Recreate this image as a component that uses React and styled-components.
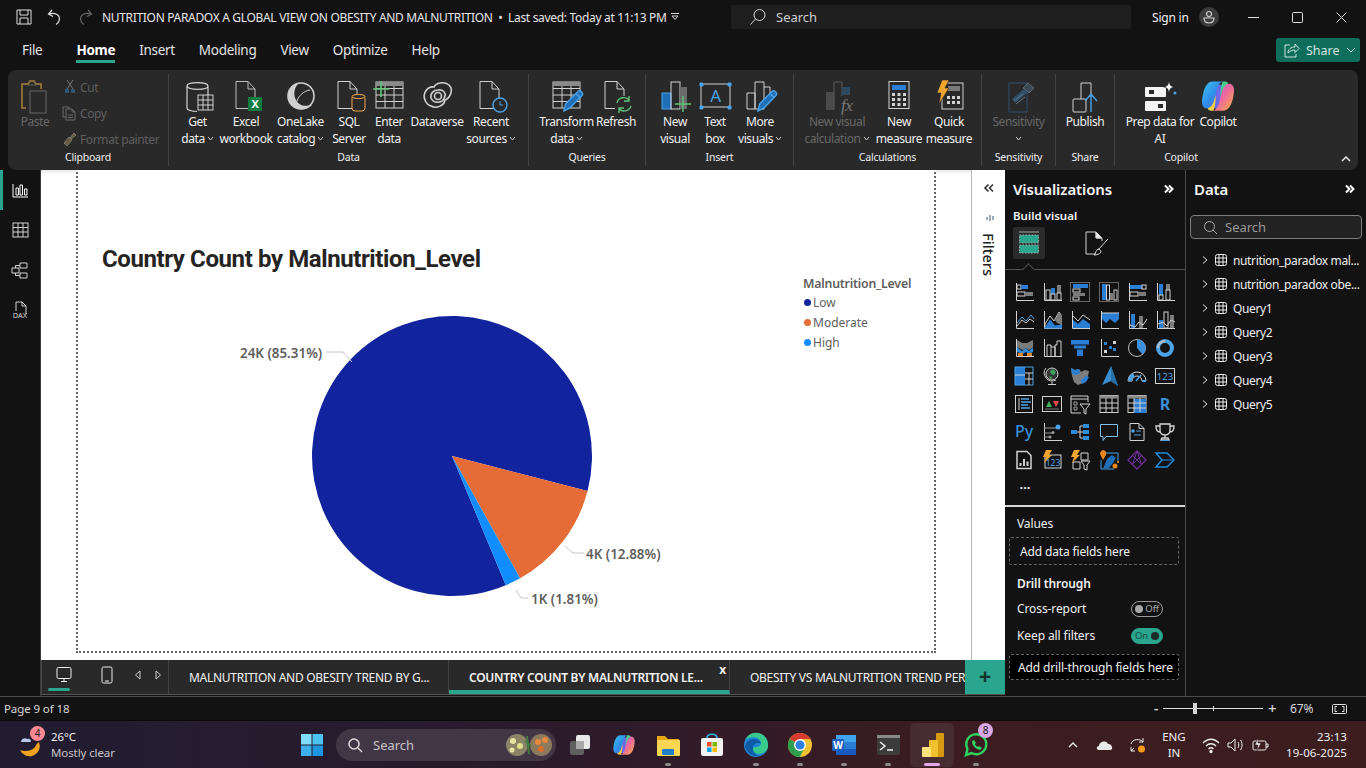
import React from "react";
import styled, { createGlobalStyle } from "styled-components";

const FONT = `"Noto Sans", "Open Sans", "Liberation Sans", sans-serif`;
const W = "#d2d2d2";
const B = "#2a7fd4";
const L = "#4ba3e8";
const G = "#7c7c7c";
const TEAL = "#2aa58e";

const GlobalStyle = createGlobalStyle`
  html, body { margin: 0; padding: 0; background: #111; }
  * { box-sizing: border-box; }
  body { font-family: ${FONT}; }
`;

const Page = styled.div`
  width: 1366px;
  height: 768px;
  display: flex;
  flex-direction: column;
  background: #121212;
  color: #f0f0f0;
  overflow: hidden;
`;

const Ico = styled.svg.attrs((p) => ({
  width: p.$w || p.$s || 36,
  height: p.$h || p.$s || 36,
  viewBox: `0 0 ${p.$w || p.$s || 36} ${p.$h || p.$s || 36}`,
  fill: "none",
  stroke: p.$c || W,
  strokeWidth: p.$sw || 1,
}))`
  display: block;
  flex: none;
  overflow: visible;
`;

/* title bar */
const TitleBar = styled.div`
  height: 34px;
  display: flex;
  align-items: center;
  padding-left: 15px;
  font-size: 12px;
`;
const TitleIcon = styled.div`
  width: ${(p) => p.$w}px;
  flex: none;
  display: flex;
`;
const TitleText = styled.div`
  width: 565px;
  white-space: nowrap;
  letter-spacing: -0.32px;
  color: #e6e6e6;
  margin-left: 1px;
`;
const TitleCaret = styled.div`
  width: 64px;
  padding-left: 3px;
`;
const SearchBox = styled.div`
  width: 400px;
  height: 24px;
  background: #1e1e1e;
  border-radius: 2px;
  display: flex;
  align-items: center;
  gap: 9px;
  padding-left: 18px;
  font-size: 13px;
  color: #cfcfcf;
`;
const SignIn = styled.div`
  margin-left: 21px;
  width: 92px;
  display: flex;
  align-items: center;
  gap: 10px;
  font-size: 12px;
  letter-spacing: -0.2px;
`;
const Avatar = styled.div`
  width: 20px;
  height: 20px;
  border-radius: 50%;
  background: #3b3b3b;
  display: flex;
  align-items: center;
  justify-content: center;
`;
const WinButtons = styled.div`
  display: flex;
  width: 99px;
  justify-content: space-between;
`;

/* menu */
const MenuBar = styled.div`
  height: 36px;
  display: flex;
  align-items: flex-start;
  padding-left: 22px;
  font-size: 13.5px;
  color: #e4e4e4;
`;
const MenuItem = styled.div`
  margin-right: ${(p) => p.$mr ?? 24}px;
  display: flex;
  align-items: center;
  height: 29px;
  padding-top: 6px;
  letter-spacing: -0.3px;
  font-weight: ${(p) => (p.$active ? 700 : 400)};
  color: ${(p) => (p.$active ? "#fff" : "#e4e4e4")};
  border-bottom: 3px solid ${(p) => (p.$active ? TEAL : "transparent")};
`;
const ShareButton = styled.div`
  margin-left: auto;
  margin-right: 6px;
  margin-top: 4px;
  width: 84px;
  height: 24px;
  background: #0f6d5b;
  border-radius: 3px;
  display: flex;
  align-items: center;
  gap: 6px;
  padding-left: 7px;
  font-size: 12.5px;
  color: #cfe6e0;
`;

/* ribbon */
const Ribbon = styled.div`
  margin: 0 8px;
  height: 100px;
  background: #292929;
  border-radius: 8px;
  display: flex;
  position: relative;
`;
const Group = styled.div`
  width: ${(p) => p.$w}px;
  height: 92px;
  margin-top: 4px;
  display: flex;
  flex-direction: column;
  border-right: ${(p) => (p.$last ? "none" : "1px solid #444")};
`;
const GroupBody = styled.div`
  height: 76px;
  display: flex;
  padding-left: ${(p) => p.$pl || 0}px;
`;
const GroupLabel = styled.div`
  height: 14px;
  line-height: 14px;
  text-align: center;
  font-size: 10.5px;
  letter-spacing: -0.2px;
  color: #eee;
`;
const RibbonBtn = styled.div`
  width: ${(p) => p.$w}px;
  flex: none;
  display: flex;
  flex-direction: column;
  align-items: center;
  padding-top: 4px;
  font-size: 12px;
  line-height: 17px;
  text-align: center;
  letter-spacing: -0.42px;
  white-space: nowrap;
  color: ${(p) => (p.$dim ? "#686868" : "#f0f0f0")};
`;
const BtnLabel = styled.div`
  margin-top: -1px;
  display: flex;
  flex-direction: column;
  align-items: center;
`;
const LabelLine = styled.span`
  display: flex;
  align-items: center;
  gap: 2px;
  min-height: 17px;
`;
const ClipColumn = styled.div`
  display: flex;
  flex-direction: column;
  padding-top: 2px;
  gap: 4px;
`;
const ClipRow = styled.div`
  height: 22px;
  display: flex;
  align-items: center;
  gap: 2px;
  font-size: 12px;
  letter-spacing: -0.38px;
  color: #5f5f5f;
  white-space: nowrap;
`;
const CollapseCaret = styled.div`
  position: absolute;
  right: 7px;
  bottom: 6px;
`;

/* main */
const Main = styled.div`
  height: 526px;
  display: flex;
`;
const Rail = styled.div`
  width: 41px;
  flex: none;
  border-right: 1px solid #3c3c3c;
  display: flex;
  flex-direction: column;
`;
const RailItem = styled.div`
  height: 40px;
  display: flex;
  align-items: center;
  justify-content: center;
  border-left: 3px solid ${(p) => (p.$active ? TEAL : "transparent")};
  padding-right: 3px;
`;
const Center = styled.div`
  width: 964px;
  flex: none;
  display: flex;
  flex-direction: column;
`;
const CanvasRow = styled.div`
  height: 490px;
  display: flex;
  background: #fff;
  overflow: hidden;
`;
const Canvas = styled.div`
  width: 931px;
  flex: none;
  padding-left: 35px;
  border-right: 1px solid #b8b8b8;
  overflow: hidden;
  background: linear-gradient(#e6e6e6, #fff 4px);
`;
const ReportPage = styled.div`
  width: 860px;
  height: 504px;
  margin-top: -21px;
  border: 2px dotted #666;
  border-top: none;
  background: #fff;
  padding: 94px 0 0 24px;
  color: #252423;
`;
const ChartTitle = styled.div`
  font-family: Roboto, sans-serif;
  font-size: 24px;
  font-weight: 700;
  height: 33px;
  line-height: 32px;
  color: #252423;
  letter-spacing: -0.4px;
`;
const ChartRow = styled.div`
  display: flex;
`;
const Legend = styled.div`
  margin-left: 13px;
  display: flex;
  flex-direction: column;
  font-size: 12px;
  color: #605e5c;
`;
const LegendTitle = styled.div`
  font-weight: 600;
  font-size: 12.3px;
  height: 16px;
  line-height: 16px;
  letter-spacing: -0.2px;
`;
const LegendItem = styled.div`
  height: 20px;
  display: flex;
  align-items: center;
  gap: 2px;
  &::before {
    content: "";
    width: 7px;
    height: 7px;
    border-radius: 50%;
    margin-left: 1px;
    background: ${(p) => p.$c};
  }
`;
const PieLabel = styled.text`
  font-family: ${FONT};
  font-size: 13.4px;
  font-weight: 600;
  fill: #605e5c;
  stroke: none;
`;
const FilterPane = styled.div`
  width: 33px;
  flex: none;
  display: flex;
  flex-direction: column;
  align-items: center;
  color: #333;
  padding-top: 13px;
`;
const FilterBars = styled.div`
  margin: 20px 0 0 5px;
`;
const FiltersLabel = styled.div`
  writing-mode: vertical-rl;
  font-size: 14.5px;
  font-weight: 500;
  margin-top: 10px;
  color: #222;
  letter-spacing: 0.1px;
`;
const TabBar = styled.div`
  height: 35px;
  background: #292929;
  border-bottom: 1px solid #555;
  display: flex;
`;
const ViewTabs = styled.div`
  width: 128px;
  flex: none;
  display: flex;
  align-items: center;
  padding-bottom: 5px;
  border-right: 1px solid #444;
  border-left: 1px solid #444;
  position: relative;
`;
const ViewUnderline = styled.div`
  position: absolute;
  left: 6px;
  bottom: 3px;
  width: 22px;
  height: 3px;
  border-radius: 2px;
  background: ${TEAL};
`;
const ViewIcon = styled.div`
  width: ${(p) => p.$w}px;
  display: flex;
  justify-content: center;
`;
const Tab = styled.div`
  width: ${(p) => p.$w}px;
  flex: ${(p) => (p.$grow ? 1 : "none")};
  min-width: 0;
  overflow: hidden;
  display: flex;
  align-items: center;
  padding: 5px 0 0 20px;
  white-space: nowrap;
  font-size: 12px;
  letter-spacing: -0.28px;
  font-weight: ${(p) => (p.$active ? 600 : 400)};
  color: #f2f2f2;
  position: relative;
  border-bottom: 4px solid ${(p) => (p.$active ? TEAL : "transparent")};
  border-right: ${(p) => (p.$sep ? "1px solid #444" : "none")};
`;
const TabClose = styled.span`
  position: absolute;
  right: 3px;
  top: 1px;
  font-size: 12px;
  font-weight: 700;
`;
const AddTab = styled.div`
  width: 40px;
  flex: none;
  background: ${TEAL};
  display: flex;
  align-items: center;
  justify-content: center;
  padding-bottom: 3px;
  color: #14322c;
  font-size: 22px;
  font-weight: 700;
  border-bottom: 1px solid ${TEAL};
`;

/* right panes */
const VizPane = styled.div`
  width: 181px;
  flex: none;
  border-right: 1px solid #4a4a4a;
  display: flex;
  flex-direction: column;
  position: relative;
`;
const PaneHead = styled.div`
  height: 38px;
  padding: 0 11px 0 8px;
  display: flex;
  align-items: center;
  justify-content: space-between;
  font-size: 15px;
  font-weight: 600;
  letter-spacing: -0.1px;
  color: #f4f4f4;
`;
const SubHead = styled.div`
  font-size: 11.5px;
  font-weight: 600;
  padding-left: 8px;
  height: 17px;
  line-height: 15px;
  color: #f4f4f4;
`;
const BuildTabs = styled.div`
  display: flex;
  padding-left: 8px;
  height: 45px;
  border-bottom: 1px solid #555;
  position: relative;
  gap: 34px;
`;
const BuildTab = styled.div`
  width: 32px;
  height: 32px;
  border-radius: 2px;
  background: ${(p) => (p.$active ? "#2a2a2a" : "transparent")};
  display: flex;
  align-items: center;
  justify-content: center;
  margin-top: 2px;
`;
const Notch = styled.div`
  position: absolute;
  left: 19px;
  bottom: -5px;
  width: 9px;
  height: 9px;
  background: #121212;
  border-left: 1px solid #555;
  border-top: 1px solid #555;
  transform: rotate(45deg);
`;
const Gallery = styled.div`
  display: grid;
  grid-template-columns: repeat(6, 28.2px);
  grid-auto-rows: 28px;
  padding: 8px 0 0 5px;
  height: 209px;
  justify-items: center;
  align-items: center;
`;
const MoreDots = styled.div`
  width: 40px;
  font-size: 13px;
  font-weight: 700;
  text-align: center;
  line-height: 10px;
`;
const Wells = styled.div`
  border-top: 2px solid #d8d8d8;
  position: absolute;
  top: 335px;
  left: 0;
  right: 0;
  padding-top: 8px;
  font-size: 12px;
  letter-spacing: -0.1px;
  display: flex;
  flex-direction: column;
`;
const WellLabel = styled.div`
  padding-left: 12px;
  height: 18px;
  line-height: 18px;
  margin-top: ${(p) => p.$mt || 0}px;
  font-weight: ${(p) => (p.$bold ? 600 : 400)};
`;
const DropZone = styled.div`
  margin: ${(p) => p.$mt}px 6px 0 4px;
  height: ${(p) => p.$h}px;
  border: 1px dashed #666;
  border-radius: 2px;
  background: ${(p) => p.$bg || "transparent"};
  display: flex;
  align-items: center;
  padding-left: ${(p) => p.$pl}px;
  font-size: 12px;
  letter-spacing: -0.15px;
  color: #f0f0f0;
`;
const ToggleRow = styled.div`
  height: 27px;
  margin-top: ${(p) => p.$mt || 0}px;
  padding: 0 22px 0 12px;
  display: flex;
  align-items: center;
  justify-content: space-between;
`;
const Toggle = styled.div`
  width: 32px;
  height: 16px;
  border-radius: 8px;
  border: 1px solid ${(p) => (p.$on ? TEAL : "#9a9a9a")};
  background: ${(p) => (p.$on ? TEAL : "transparent")};
  color: ${(p) => (p.$on ? "#0f4a3e" : "#a8a8a8")};
  font-size: 9.5px;
  display: flex;
  flex-direction: ${(p) => (p.$on ? "row" : "row-reverse")};
  align-items: center;
  justify-content: space-between;
  padding: 0 3px;
  &::after {
    content: "";
    width: 8px;
    height: 8px;
    border-radius: 50%;
    background: ${(p) => (p.$on ? "#1c2c2a" : "#a8a8a8")};
  }
`;
const DataPane = styled.div`
  flex: 1;
  display: flex;
  flex-direction: column;
`;
const DataSearch = styled.div`
  margin: 7px 4px 0 4px;
  height: 24px;
  background: #222;
  border: 1px solid #7e7e7e;
  border-radius: 4px;
  display: flex;
  align-items: center;
  gap: 7px;
  padding-left: 12px;
  font-size: 13px;
  color: #9a9a9a;
`;
const Tree = styled.div`
  margin-top: 9px;
  display: flex;
  flex-direction: column;
`;
const TreeRow = styled.div`
  height: 24px;
  display: flex;
  align-items: center;
  padding-left: 15px;
  gap: 6px;
  font-size: 12px;
  letter-spacing: -0.36px;
  color: #eee;
  white-space: nowrap;
  overflow: hidden;
`;

/* status and task bars */
const StatusBar = styled.div`
  height: 24px;
  display: flex;
  align-items: center;
  padding-left: 4px;
  font-size: 11.5px;
  letter-spacing: -0.1px;
  color: #d8d8d8;
  border-top: 1px solid #4d4d4d;
`;
const ZoomTools = styled.div`
  margin-left: auto;
  display: flex;
  align-items: center;
  color: #d8d8d8;
  font-size: 12px;
  padding-right: 19px;
`;
const ZoomSign = styled.span`
  width: 8px;
  text-align: center;
  font-size: 15px;
  line-height: 15px;
  font-weight: 500;
`;
const ZoomTrack = styled.div`
  width: 100px;
  height: 1px;
  background: #ddd;
  position: relative;
  margin: 0 5px 0 3px;
`;
const ZoomThumb = styled.div`
  position: absolute;
  left: 30px;
  top: -5px;
  width: 4px;
  height: 11px;
  background: #d4d4d4;
`;
const ZoomTick = styled.div`
  position: absolute;
  left: 50px;
  top: -2px;
  width: 1px;
  height: 5px;
  background: #ddd;
`;
const ZoomPct = styled.div`
  width: 56px;
  padding-left: 14px;
`;
const TaskBar = styled.div`
  height: 48px;
  border-top: 1px solid #0a0a0a;
  background: linear-gradient(90deg, #211c30 0%, #2a1b2c 38%, #3a1c22 68%, #3d1e1e 100%);
  display: flex;
  align-items: center;
  color: #f0f0f0;
`;
const Weather = styled.div`
  width: 290px;
  flex: none;
  display: flex;
  align-items: center;
  padding-left: 18px;
  gap: 9px;
  position: relative;
  font-size: 11.5px;
  line-height: 16px;
  letter-spacing: -0.1px;
`;
const WeatherText = styled.div`
  display: flex;
  flex-direction: column;
  color: #f0f0f0;
  & > span + span {
    color: #c8c4c8;
  }
`;
const Badge = styled.div`
  position: absolute;
  left: ${(p) => p.$l}px;
  top: ${(p) => p.$t}px;
  width: 15px;
  height: 15px;
  border-radius: 50%;
  background: ${(p) => p.$c};
  color: #1a1a1a;
  font-size: 10px;
  line-height: 15px;
  text-align: center;
`;
const TaskSlot = styled.div`
  width: 44px;
  height: 44px;
  flex: none;
  display: flex;
  align-items: center;
  justify-content: center;
  position: relative;
  border-radius: 5px;
  background: ${(p) => (p.$active ? "rgba(255,255,255,.07)" : "transparent")};
  &::after {
    content: "";
    display: ${(p) => (p.$dot ? "block" : "none")};
    position: absolute;
    bottom: 1px;
    left: 50%;
    transform: translateX(-50%);
    width: ${(p) => (p.$active ? 16 : 6)}px;
    height: 3px;
    border-radius: 2px;
    background: ${(p) => (p.$active ? "#e3a8e8" : "#8f8a8c")};
  }
`;
const TaskSearch = styled.div`
  width: 220px;
  height: 32px;
  flex: none;
  margin: 0 2px 0 2px;
  background: rgba(255, 255, 255, 0.12);
  border-radius: 16px;
  display: flex;
  align-items: center;
  padding-left: 11px;
  gap: 10px;
  font-size: 13px;
  color: #c8c4c8;
`;
const SearchArt = styled.div`
  margin-left: auto;
  margin-right: 3px;
`;
const Tray = styled.div`
  margin-left: auto;
  display: flex;
  align-items: center;
  font-size: 11.5px;
  padding-right: 19px;
`;
const TraySlot = styled.div`
  width: ${(p) => p.$w}px;
  display: flex;
  justify-content: center;
  flex: none;
`;
const Lang = styled.div`
  width: 36px;
  text-align: center;
  line-height: 16px;
  margin: 0 6px 0 3px;
`;
const Clock = styled.div`
  margin-left: 12px;
  text-align: right;
  line-height: 16px;
  letter-spacing: 0.1px;
`;

/* drawings */
const Caret = () => (
  <Ico $s={7} $c="#d0d0d0"><path d="M1 2l2.500 3L6 2" /></Ico>
);
const DoubleChevron = () => (
  <Ico $s={10} $c="#fff" $sw={2}><path d="M1 1.500l3.500 3.500L1 8.500M5 1.500L8.500 5 5 8.500" /></Ico>
);
const Grid = ({ x, y, w, h, r, c, s }) => {
  const d = [];
  for (let i = 1; i < r; i++) d.push(`M${x} ${y + (h * i) / r}h${w}`);
  for (let i = 1; i < c; i++) d.push(`M${x + (w * i) / c} ${y}v${h}`);
  return (
    <g stroke={s || W}>
      <rect x={x} y={y} width={w} height={h} fill="#292929" />
      <path d={d.join("")} />
    </g>
  );
};
const Doc = ({ s }) => (
  <path d="M8 3.500H20L27 11V30.500H8ZM20 3.500V11H27" stroke={s} />
);
const Pencil = ({ dx = 0, dy = 0 }) => (
  <g transform={`translate(${dx} ${dy})`} stroke={L} strokeWidth="1.4">
    <path d="M13 33l1.500-7L27 13.500c2-2 6 1.500 4 4L19 30z" fill="#1f6fb8" />
    <path d="M25 15.500l4 4" />
  </g>
);
const CopilotMark = ({ id, s = 32 }) => (
  <svg width={s} height={s} viewBox="0 0 32 32">
    <defs>
      <linearGradient id={`${id}a`} x1="0" y1="0" x2="1" y2="1">
        <stop offset="0" stopColor="#39c6f0" />
        <stop offset="0.55" stopColor="#2f8ae8" />
        <stop offset="1" stopColor="#7a5ce0" />
      </linearGradient>
      <linearGradient id={`${id}b`} x1="0" y1="0" x2="1" y2="1">
        <stop offset="0" stopColor="#b45de0" />
        <stop offset="0.5" stopColor="#f06a9a" />
        <stop offset="1" stopColor="#f7b23c" />
      </linearGradient>
    </defs>
    <path d="M14 6h8l-4 21h-8z" fill="#6a6ae8" />
    <path d="M11 3h9c-4 2-5 6-6 11-1 6-3 12-6 13H6C3 27 1 24 2 18 3 10 6 3 11 3z" fill={`url(#${id}a)`} />
    <path d="M21 29h-9c4-2 5-6 6-11 1-6 3-12 6-13h2c3 0 5 3 4 9-1 8-4 15-9 15z" fill={`url(#${id}b)`} />
    <path d="M20 3h2c2 0 3 1 3 2-3 1-5 4-6 9l-1 3c0-6 1-11 2-14z" fill="#46d08c" />
    <path d="M12 29h-2c-2 0-3-1-3-2 3-1 5-4 6-9l1-3c0 6-1 11-2 14z" fill="#f5d142" />
  </svg>
);

const ribbonIcons = {
  paste: (
    <Ico $c="#666">
      <path d="M9 30H5V6h6l2-3h4l2 3h5v5" stroke="#8a6b38" strokeWidth="2" />
      <path d="M11 7h8v-1" />
      <rect x="13" y="13" width="16" height="22" fill="#292929" />
    </Ico>
  ),
  get: (
    <Ico>
      <path d="M7 8c0-4.500 21-4.500 21 0s-21 4.500-21 0V30c0 2 5 3.500 10 3.500M28 8v9" strokeWidth="1.2" />
      <Grid x={18} y={17} w={15} h={15} r={3} c={3} />
    </Ico>
  ),
  excel: (
    <Ico>
      <Doc s="#bdbdbd" />
      <rect x="20" y="19" width="14" height="14" fill="#107c41" stroke="none" />
      <text x="27" y="30" fill="#fff" stroke="none" fontSize="11" fontWeight="700" textAnchor="middle" fontFamily={FONT}>X</text>
    </Ico>
  ),
  onelake: (
    <Ico>
      <circle cx="18" cy="18" r="13" strokeWidth="1.6" stroke="#d0d0d0" />
      <path d="M16 5C8 6 4 13 5 20c1 6 6 10 11 11 6 1 10-1 13-4-9 2-13 0-16-5-3-5-2-13 3-17z" fill="#d0d0d0" stroke="none" />
      <path d="M14 23c2-6 7-10 13-11" stroke="#d0d0d0" />
    </Ico>
  ),
  sql: (
    <Ico>
      <path d="M7 3.500H19L26 11V30.500H7ZM19 3.500V11H26" />
      <rect x="21" y="17" width="13" height="16" rx="3" fill="#292929" stroke="#f0a64a" />
      <ellipse cx="27.500" cy="18.500" rx="6.500" ry="2" stroke="#f0a64a" fill="#292929" />
    </Ico>
  ),
  enter: (
    <Ico>
      <Grid x={5} y={4} w={27} h={26} r={4} c={3} />
      <rect x="5" y="4" width="27" height="4" fill="#8a8a8a" stroke="none" />
      <path d="M2 11h16M10 3v16" stroke="#5fc777" strokeWidth="1.6" />
    </Ico>
  ),
  dataverse: (
    <Ico $sw={1.6} $c="#cfcfcf">
      <path d="M6 22c-3-7 3-14 9-13 2-4 10-6 15-2 5 5 1 13-4 15-1 6-9 9-14 6-3-1-5-3-6-6z" />
      <path d="M12 20c-1-5 3-8 7-8 5-1 8 3 7 6-1 5-5 7-9 6-2 0-4-2-5-4z" />
      <circle cx="19" cy="18" r="3.500" />
    </Ico>
  ),
  recent: (
    <Ico>
      <path d="M7 3.500H19L26 11V30.500H7ZM19 3.500V11H26" />
      <circle cx="27" cy="27" r="7" stroke={L} strokeWidth="1.4" fill="#292929" />
      <path d="M27 23v4h3" stroke={L} />
    </Ico>
  ),
  transform: (
    <Ico>
      <Grid x={4} y={4} w={27} h={26} r={4} c={3} />
      <rect x="4" y="4" width="27" height="4" fill="#8a8a8a" stroke="none" />
      <Pencil dx={2} />
    </Ico>
  ),
  refresh: (
    <Ico>
      <path d="M7 3.500H19L26 11V30.500H7ZM19 3.500V11H26" />
      <rect x="17" y="18" width="18" height="17" fill="#292929" stroke="none" />
      <path d="M19 25c1-6 9-7 12-3M33 28c-2 6-9 6-12 3M31 18v5h-5M21 35v-5h5" stroke="#5fc777" strokeWidth="1.3" />
    </Ico>
  ),
  newVisual: (
    <Ico>
      <rect x="5" y="15" width="9" height="16" fill="#1f6fb8" stroke={L} />
      <rect x="14" y="4" width="9" height="27" />
      <rect x="23" y="9" width="7" height="22" fill="#6b6b6b" stroke="none" />
      <path d="M18 26h16M26 18v16" stroke="#5fc777" strokeWidth="1.4" />
    </Ico>
  ),
  textBox: (
    <Ico>
      <rect x="4" y="6" width="29" height="23" />
      <path d="M3 5h3v3H3zM31 5h3v3h-3zM3 28h3v3H3zM31 28h3v3h-3z" fill={L} stroke={L} />
      <text x="18.500" y="24" fontSize="17" textAnchor="middle" fill={L} stroke="none" fontFamily={FONT}>A</text>
    </Ico>
  ),
  more: (
    <Ico>
      <path d="M5 15h8v16H5zM13 4h9v27h-9zM22 9h6v7" />
      <Pencil dx={3} />
    </Ico>
  ),
  calc: (
    <Ico $c="#5a5a5a">
      <rect x="7" y="14" width="8" height="18" fill="#4a4a4a" stroke="none" />
      <path d="M15 32V4h8v14" />
      <path d="M23 9h8v8h-8z" fill="#2e4a62" stroke="none" />
      <text x="22" y="33" fontSize="17" fontStyle="italic" fontFamily="Liberation Serif, serif" fill="#7a7a7a" stroke="none">fx</text>
    </Ico>
  ),
  measure: (
    <Ico>
      <rect x="8" y="3.500" width="20" height="27" />
      <rect x="11" y="7" width="14" height="5" fill="#2a7fd4" stroke="none" />
      <path d="M11 15h3v3h-3zM16.500 15h3v3h-3zM22 15h3v3h-3zM11 20h3v3h-3zM16.500 20h3v3h-3zM22 20h3v3h-3zM11 25h3v3h-3zM16.500 25h3v3h-3zM22 25h3v3h-3z" fill={W} stroke="none" />
    </Ico>
  ),
  quick: (
    <Ico>
      <rect x="11" y="5" width="21" height="26" />
      <rect x="17" y="8" width="12" height="5" fill="#7a7a7a" stroke="none" />
      <path d="M16 18h3v3h-3zM21 18h3v3h-3zM26 18h3v3h-3zM16 23h3v3h-3zM21 23h3v3h-3zM26 23h3v3h-3z" fill={W} stroke="none" />
      <path d="M11 2h7l-4 8h4L8 26l2-11H6z" fill="#f2a52f" stroke="#292929" strokeWidth=".6" />
    </Ico>
  ),
  sensitivity: (
    <Ico $c="#2f4f6b">
      <path d="M8 5h18v29H8z" />
      <path d="M11 21l12-10 3 4-12 10z" fill="#2f4f6b" stroke="none" />
      <path d="M22 10l5-5 6 5-5 5z" stroke="#5a6a76" fill="#3c4a56" />
      <path d="M13 23l9-7M15 26l9-7" stroke="#62788a" />
    </Ico>
  ),
  publish: (
    <Ico>
      <path d="M14 21V5h10v14" />
      <rect x="6" y="21" width="13" height="13" rx="1" />
      <path d="M24 34V17M18 23l6-7 6 7" stroke={L} strokeWidth="1.4" />
    </Ico>
  ),
  prep: (
    <Ico>
      <rect x="3" y="9" width="21" height="10" rx="1" fill="#f4f4f4" stroke="none" />
      <rect x="3" y="23" width="21" height="10" rx="1" fill="#f4f4f4" stroke="none" />
      <rect x="7" y="12" width="5" height="4" fill="#292929" stroke="none" />
      <rect x="16" y="26" width="5" height="4" fill="#292929" stroke="none" />
      <path d="M27 2c1 5 2 6 6 7-4 1-5 2-6 7-1-5-2-6-6-7 4-1 5-2 6-7z" fill="#292929" stroke="none" />
      <path d="M27 4c.8 3.500 1.500 4.300 4.500 5-3 .7-3.700 1.500-4.500 5-.8-3.500-1.500-4.300-4.500-5 3-.7 3.700-1.500 4.500-5z" fill="#fff" stroke="none" />
      <circle cx="33" cy="15" r="1.500" fill={L} stroke="none" />
    </Ico>
  ),
};

const ribbon = [
  { w: 161, label: "Clipboard", clip: true },
  { w: 360, label: "Data", pl: 7, items: [
    ["get", 43, ["Get", "data"], 2], ["excel", 54, ["Excel", "workbook"]], ["onelake", 55, ["OneLake", "catalog"], 2],
    ["sql", 42, ["SQL", "Server"]], ["enter", 38, ["Enter", "data"]], ["dataverse", 58, ["Dataverse"]], ["recent", 50, ["Recent", "sources"], 2],
  ] },
  { w: 117, label: "Queries", pl: 11, items: [["transform", 53, ["Transform", "data"], 2], ["refresh", 46, ["Refresh"]]] },
  { w: 148, label: "Insert", pl: 9, items: [["newVisual", 40, ["New", "visual"]], ["textBox", 40, ["Text", "box"]], ["more", 50, ["More", "visuals"], 2]] },
  { w: 188, label: "Calculations", pl: 10, items: [["calc", 66, ["New visual", "calculation"], 2, true], ["measure", 58, ["New", "measure"]], ["quick", 42, ["Quick", "measure"]]] },
  { w: 74, label: "Sensitivity", items: [["sensitivity", 73, ["Sensitivity", ""], 2, true]] },
  { w: 59, label: "Share", items: [["publish", 58, ["Publish"]]] },
  { w: 132, label: "Copilot", pl: 7, items: [["prep", 76, ["Prep data for", "AI"]], ["copilot", 40, ["Copilot"]]] },
];

const R = (x, y, w, h, f, k) => (
  <rect key={k} x={x} y={y} width={w} height={h} fill={f || "none"} stroke={f ? "none" : W} />
);
const axis = <path d="M2.500 1V18.500H20" />;

const viz = [
  <>{axis}{R(3, 3, 4, 4)}{R(7, 3, 7, 4, B)}{R(3, 10, 8, 4)}{R(11, 10, 8, 4, G)}</>,
  <>{axis}{R(4, 8, 4, 10)}{R(9, 6, 4, 6, B)}{R(9, 12, 4, 6)}{R(15, 3, 4, 8, G)}{R(15, 11, 4, 7)}</>,
  <><rect x=".5" y=".5" width="19" height="19" stroke="#666" />{R(3, 2, 15, 4, B)}{R(3, 7, 7, 3)}{R(3, 11, 12, 3, G)}{R(3, 15, 6, 3)}</>,
  <><rect x=".5" y=".5" width="19" height="19" stroke="#666" />{R(3, 2, 4, 16, B)}{R(7.500, 3, 3, 15)}{R(11, 11, 3, 7, G)}{R(15, 8, 3, 10)}</>,
  <>{axis}{R(3, 3, 12, 4, B)}{R(15, 3, 4, 4)}{R(3, 10, 8, 4)}{R(11, 10, 8, 4, G)}</>,
  <>{axis}{R(4, 2, 4, 11, B)}{R(4, 13, 4, 5)}{R(11, 2, 4, 6, G)}{R(11, 8, 4, 10)}</>,
  <>{axis}<path d="M3 13l5-6 4 4 5-6 3 4" stroke={L} /><path d="M3 16l5-6 4 3 4-4 4 3" /></>,
  <>{axis}<path d="M3 18V14L8 6l4 5 5-9 2 3v13z" fill="none" /><path d="M2 18.500l6-9 5 6 7-1v4z" fill={B} stroke="none" /><path d="M13 10l4-8 3 6v7l-5-2z" fill={G} stroke="none" /></>,
  <>{axis}<path d="M3 6l5 5 5-6 7 5" /><path d="M3 10l5 4 5-5 7 5v4H3z" fill={B} stroke="none" /></>,
  <>{axis}<path d="M3 3h17v6l-4 4-5-4-4 4-4-4z" fill={B} stroke="none" /><path d="M3 3h17" /></>,
  <>{axis}{R(4, 4, 4, 14, B)}{R(12, 6, 4, 12, G)}<path d="M3 15l5 2 4-5 4 3 4-6" /></>,
  <>{axis}{R(4, 10, 4, 8, B)}{R(9, 2, 4, 16)}{R(15, 5, 4, 13, G)}<path d="M3 14l5-2 4 4 4-6 4 2" /></>,
  <>{axis}<path d="M3 2l5 3 5 0 6-3v7l-4 3-3-2-3 2-6-3z" fill={G} stroke="none" /><path d="M3 9l5 4 4-3 3 3 4-4v5l-4 2-3-2-3 2-6-2z" fill="#2f8ad8" stroke="none" /><path d="M4 15h5v3H4zM13 15h5v3h-5z" fill="#e8871e" stroke="none" /></>,
  <>{axis}<path d="M5 18V7h4v11M9 9h4v9M13 18V7h2V3h4v15" /></>,
  <><path d="M1 2h18v5h-3v4h-3v7H7v-7H4V7H1z" fill={B} stroke="none" /><path d="M1 7h18M4 11h12" stroke="#121212" /></>,
  <>{axis}{R(5, 4, 3, 3, B)}{R(5, 12, 3, 3, W)}{R(10, 8, 3, 3, B)}{R(14, 3, 3, 3, W)}{R(14, 10, 3, 3, B)}</>,
  <><circle cx="10" cy="10" r="8.500" stroke="#bbb" /><path d="M10 1.500a8.500 8.500 0 0 1 5.500 15L10 10z" fill="#3b8fdc" stroke="none" /></>,
  <><circle cx="10" cy="10" r="7" stroke={L} strokeWidth="4" /><path d="M10 3a7 7 0 0 0-7 7" stroke="#bcbcbc" strokeWidth="2" /></>,
  <>{R(1, 1, 10, 18, B)}<rect x="1" y="1" width="18" height="18" stroke={L} /><path d="M11 7h8M11 13h8M15 7v12M1 9h10" stroke={W} /></>,
  <><circle cx="10" cy="8" r="6" fill="#333" /><path d="M8 5l3-2 3 3-2 3-3-1zM7 10l3 1-1 3z" fill="#3fa35c" stroke="none" /><path d="M4 2a8 8 0 0 0 10 12M10 16v2M6 18.500h8" /></>,
  <><path d="M1 2l4 2 4-1 2 3 4-2 4 1-2 9-4 3-5 2-4-3-2-6z" fill={G} stroke="none" /><path d="M1 2l4 2 4-1 1 4-4 2-4-1zM11 14l5-4 3 1-3 5-4 2z" fill={B} stroke="none" /></>,
  <><path d="M12 0l7 20-7-5-9 4z" fill="#3a8fcf" stroke="none" /><path d="M12 0v15l7 5z" fill="#2670a8" stroke="none" /></>,
  <><path d="M1 15a9 9 0 0 1 18 0h-4a5 5 0 0 0-10 0z" stroke={W} /><path d="M1 15a9 9 0 0 1 5-8l2 4a5 5 0 0 0-3 4z" fill={L} stroke="none" /><path d="M9 15l5-6" stroke={L} strokeWidth="1.500" /><path d="M15 15h4" stroke={L} strokeWidth="2" /></>,
  <><rect x=".5" y="2.500" width="19" height="15" /><text x="10" y="14" fontSize="9.500" textAnchor="middle" fill={L} stroke="none" fontFamily={FONT}>123</text></>,
  <><rect x="1.500" y="1.500" width="17" height="17" /><path d="M5 4v12" /><path d="M7 5h8M7 8h10M7 11h7M7 14h9" stroke={L} strokeWidth="1.400" /></>,
  <><rect x=".5" y="2.500" width="19" height="15" /><path d="M4 13l3-6 3 6z" fill="#3fb45c" stroke="none" /><path d="M11 7h6l-3 6z" fill="#e84b4b" stroke="none" /><path d="M3 15h14" stroke="#777" /></>,
  <><path d="M18 8V2H1v17h10M1 5h17" /><path d="M10 10h10l-4 5v5l-2-1v-4z" /><path d="M4 8h3v3H4zM4 13h3v3H4z" stroke="#9a9a9a" /></>,
  <><rect x="1" y="1.500" width="18" height="17" /><rect x="1" y="1.500" width="18" height="3" fill="#8a8a8a" stroke="none" /><path d="M1 9h18M1 14h18M7 4v14M13 4v14" /></>,
  <><rect x="1" y="1.500" width="18" height="17" />{R(7, 5, 12, 14, B)}<rect x="1" y="1.500" width="18" height="3" fill="#8a8a8a" stroke="none" /><path d="M1 9h18M1 14h18M7 4v14M13 4v14" stroke={W} /></>,
  <text x="10" y="16" fontSize="16" fontWeight="700" textAnchor="middle" fill="#3a8fd8" stroke="none" fontFamily={FONT}>R</text>,
  <text x="10" y="15" fontSize="16" fontWeight="500" textAnchor="middle" fill="#3a8fd8" stroke="none" fontFamily={FONT}>Py</text>,
  <>{axis}<path d="M2 6h13M2 11h8M2 15h5" stroke="#999" /><circle cx="16" cy="5" r="2.500" fill={L} stroke="none" /><circle cx="11" cy="10.500" r="1.500" fill="#999" stroke="none" /><circle cx="8" cy="15" r="1.500" fill="#999" stroke="none" /></>,
  <><path d="M1 8h6v4H1zM13 2h6v4h-6zM13 8h6v4h-6zM13 14h6v4h-6z" fill="#2f8ad8" stroke="none" /><path d="M7 10h3M10 4v12M10 4h3M10 10h3M10 16h3" stroke={W} /></>,
  <path d="M1.500 2.500h17v12H7l-3 4v-4H1.500z" stroke="#7fbfe8" />,
  <><path d="M3 1.500h9l5 5v12H3zM12 1.500v5h5" /><circle cx="6" cy="9" r="1.800" fill={L} stroke="none" /><path d="M9 9h5M7 13h7" stroke={L} /></>,
  <><path d="M5 2h10v6c0 3-2 5-5 5S5 11 5 8zM5 4H1c0 4 2 6 4 6M15 4h4c0 4-2 6-4 6M10 13v3M6 18h8l-1-2H7z" stroke="#d8d8d8" strokeWidth="1.300" /><path d="M6 18.500h8" stroke={L} /></>,
  <><path d="M3 1.500h10l4 4v13H3z" strokeWidth="1.500" /><path d="M5.500 16v-3h2v3zM9 16V9h2v7zM12.500 16v-4.500h2V16z" fill={W} stroke="none" /></>,
  <><rect x="3" y="5" width="16" height="13" /><text x="11" y="15.500" fontSize="8.500" textAnchor="middle" fill={L} stroke="none" fontFamily={FONT}>123</text><path d="M4 0h6L7 5h3L2 13l2-6H1z" fill="#f2a52f" stroke="none" /></>,
  <><path d="M11 3h7v7h-7zM3 12h7v7H3z" /><path d="M11 11h9l-3 4v5l-3-1v-4z" /><path d="M4 0h6L7 5h3L2 13l2-6H1z" fill="#f2a52f" stroke="none" /></>,
  <><path d="M6 3h13v10" stroke={L} /><path d="M2 10v9h13" stroke={L} /><path d="M8 9l5-4 4 3-3 5-4 5-6 1z" fill="#1f6fb8" stroke="none" /><path d="M4 0a3.500 3.500 0 0 1 3 5L4 10 1.500 5A3.500 3.500 0 0 1 4 0z" fill="#e8871e" stroke="none" /><circle cx="16" cy="16" r="2.500" fill="#e8871e" stroke="none" /><circle cx="19" cy="12" r="1" fill="#e8871e" stroke="none" /></>,
  <g stroke="#6e2c93" strokeWidth="1.400"><path d="M10 1l9 9-9 9-9-9z" /><path d="M10 1L5.500 14.500M10 1l4.500 13.500M5.500 5.500L14.500 14.500M14.500 5.500L5.500 14.500" strokeWidth="1" /></g>,
  <g stroke="#1b8be0" strokeWidth="1.400"><path d="M1 3h11l7 7-7 7H1l6-7z" /><path d="M1 3l6 7h12M7 10l-6 7" strokeWidth="1" /></g>,
];

const railIcons = [
  <Ico $s={20} $c="#fff" key="a"><path d="M3 4v13h15" /><path d="M6 8h2.500v7H6zM10 5h2.500v10H10zM14.500 9H17v6h-2.500z" /></Ico>,
  <Ico $s={20} key="b"><rect x="3" y="3" width="15" height="14" /><path d="M3 7.500h15M3 12h15M8 3v14M13 3v14" /></Ico>,
  <Ico $s={20} key="c"><path d="M2 8h7v5H2zM10 3h7v5h-7zM10 13h7v5h-7zM5.500 8V5.500H10M5.500 13v2.500H10" /></Ico>,
  <Ico $s={20} key="d"><path d="M6 11V2h6l4 4v8M12 2v4h4" /><text x="10" y="18" fontSize="7.500" fill={W} stroke="none" textAnchor="middle" fontFamily={FONT}>DAX</text></Ico>,
];

const pieCx = 350, pieCy = 180, pieR = 140;
const polar = (deg) => {
  const a = (deg * Math.PI) / 180;
  return [pieCx + pieR * Math.sin(a), pieCy - pieR * Math.cos(a)];
};
const slice = (from, to) => {
  const [x1, y1] = polar(from);
  const [x2, y2] = polar(to);
  return `M${pieCx} ${pieCy}L${x1} ${y1}A${pieR} ${pieR} 0 ${to - from > 180 ? 1 : 0} 1 ${x2} ${y2}Z`;
};

const dataRows = ["nutrition_paradox mal...", "nutrition_paradox obe...", "Query1", "Query2", "Query3", "Query4", "Query5"];

const taskApps = [
  ["snap", <Ico $s={24} key="s" $c="none"><rect x="2" y="8" width="14" height="14" rx="2" fill="#5f5f5f" /><rect x="8" y="2" width="14" height="14" rx="2" fill="#e8e8e8" /><rect x="8" y="8" width="8" height="8" fill="#a8a8a8" /></Ico>],
  ["copilot", <CopilotMark id="cpt" s={24} key="c" />],
  ["folder", <Ico $s={24} key="f" $c="none"><path d="M1 3h8l3 3h11v16H1z" fill="#e6a817" /><rect x="1" y="7" width="23" height="16" rx="1" fill="#fbd652" /><rect x="6" y="16" width="12" height="6" rx="1" fill="#1f7fc8" /></Ico>, true],
  ["store", <Ico $s={24} key="st" $c="none"><path d="M7 5c0-5 10-5 10 0" stroke="#39b4e8" strokeWidth="1.600" /><rect x="1" y="5" width="22" height="18" rx="2" fill="#f2f2f2" /><rect x="7" y="9" width="4.500" height="4.500" fill="#f25022" /><rect x="12.500" y="9" width="4.500" height="4.500" fill="#7fba00" /><rect x="7" y="14.500" width="4.500" height="4.500" fill="#00a4ef" /><rect x="12.500" y="14.500" width="4.500" height="4.500" fill="#ffb900" /></Ico>],
  ["edge", <Ico $s={24} key="e" $c="none"><circle cx="12" cy="12" r="12" fill="#1d86d8" /><path d="M24 12a12 12 0 0 0-23-5c5-4 15-4 16 3 0 3-3 4-5 4-3 0-4 2-2 5 3 3 9 2 12-1 2-2 2-4 2-6z" fill="#38c98c" /><path d="M17 11c-3-2-7-1-8 3-1 4 2 8 6 9-6 1-12-3-14-9 0-2 1-5 3-6 4-3 12-3 13 3z" fill="#0f5ba8" /></Ico>, true],
  ["chrome", <Ico $s={24} key="ch" $c="none"><circle cx="12" cy="12" r="12" fill="#f1c232" /><path d="M12 12L1.600 6A12 12 0 0 1 22.400 6H12z" fill="#d93a30" /><path d="M12 12L1.600 6A12 12 0 0 0 12 24l5-11z" fill="#2e9e4f" /><circle cx="12" cy="12" r="6" fill="#fff" /><circle cx="12" cy="12" r="4.600" fill="#2f7fe0" /></Ico>, true],
  ["word", <Ico $s={24} key="w" $c="none"><rect x="4" y="2" width="20" height="7" fill="#41a5ee" /><rect x="4" y="9" width="20" height="7" fill="#2b7cd3" /><rect x="4" y="16" width="20" height="6" fill="#185abd" /><rect x="0" y="6" width="12" height="12" rx="1" fill="#1a5fc0" /><text x="6" y="15.500" fontSize="10" fontWeight="700" textAnchor="middle" fill="#fff" fontFamily={FONT}>W</text></Ico>, true],
  ["term", <Ico $s={24} key="t" $c="none"><rect x="1" y="2" width="23" height="20" rx="2" fill="#3c3c3c" /><rect x="1" y="2" width="23" height="3" fill="#8a8a8a" /><path d="M4 9l5 4-5 4" stroke="#f0f0f0" strokeWidth="1.500" /><path d="M11 17h6" stroke="#f0f0f0" strokeWidth="1.500" /></Ico>, true],
  ["pbi", <Ico $s={24} key="p" $c="none"><rect x="16" y="0" width="8" height="24" rx="1" fill="#d69a12" /><rect x="9" y="7" width="9" height="17" rx="1" fill="#f0c02e" /><rect x="2" y="14" width="9" height="10" rx="1" fill="#f9e27a" /></Ico>, true, true],
];

export default function App() {
  return (
    <Page>
      <GlobalStyle />
      <TitleBar>
        <TitleIcon $w={31}>
          <Ico $s={18} $c="#e0e0e0"><path d="M2 2h14v14H2zM5 2v5h8V2M5 16v-6h8v6" /></Ico>
        </TitleIcon>
        <TitleIcon $w={30}>
          <Ico $s={18} $c="#e0e0e0" $sw={1.2}><path d="M6 2L2.500 6 7 8.500M3 6c6-2 12 1 10 7-.5 1.500-1.500 2.500-3 3.500" /></Ico>
        </TitleIcon>
        <TitleIcon $w={25}>
          <Ico $s={18} $c="#666" $sw={1.2}><path d="M12 2l3.500 4L11 8.500M15 6C9 4 3 7 5 13c.5 1.500 1.500 2.500 3 3.500" /></Ico>
        </TitleIcon>
        <TitleText>NUTRITION PARADOX A GLOBAL VIEW ON OBESITY AND MALNUTRITION&nbsp;&nbsp;•&nbsp;&nbsp;Last saved: Today at 11:13 PM</TitleText>
        <TitleCaret>
          <Ico $s={10} $c="#cfcfcf"><path d="M1 1.500h8M2 4h6L5 7.500z" /></Ico>
        </TitleCaret>
        <SearchBox>
          <Ico $s={18} $c="#d8d8d8"><circle cx="10.500" cy="7" r="5.500" /><path d="M6.500 11L1.500 16.500" /></Ico>
          Search
        </SearchBox>
        <SignIn>
          Sign in
          <Avatar>
            <Ico $s={14} $c="#cfcfcf" $sw={1.2}><circle cx="7" cy="4" r="2.500" /><path d="M2 8h10c0 3-2 5-5 5S2 11 2 8z" /></Ico>
          </Avatar>
        </SignIn>
        <TitleIcon $w={4} />
        <WinButtons>
          <Ico $s={11} $c="#e0e0e0"><path d="M0 5.500h11" /></Ico>
          <Ico $s={11} $c="#e0e0e0"><rect x=".5" y=".5" width="10" height="10" rx="1" /></Ico>
          <Ico $s={11} $c="#e0e0e0"><path d="M.5.500l10 10M10.500.5l-10 10" /></Ico>
        </WinButtons>
      </TitleBar>
      <MenuBar>
        <MenuItem $mr={34}>File</MenuItem>
        <MenuItem $active>Home</MenuItem>
        <MenuItem>Insert</MenuItem>
        <MenuItem>Modeling</MenuItem>
        <MenuItem>View</MenuItem>
        <MenuItem>Optimize</MenuItem>
        <MenuItem>Help</MenuItem>
        <ShareButton>
          <Ico $s={17} $c="#cfe6e0"><path d="M7 3H2v12h11v-3" /><path d="M5 11c0-4 3-6 7-6V2l4 4.500-4 4V8c-3 0-5 1-7 3z" /></Ico>
          Share
          <Ico $s={10} $c="#cfe6e0"><path d="M1 3l4 4 4-4" /></Ico>
        </ShareButton>
      </MenuBar>
      <Ribbon>
        {ribbon.map((g, gi) => (
          <Group key={g.label} $w={g.w} $last={gi === ribbon.length - 1}>
            <GroupBody $pl={g.pl}>
              {g.clip ? (
                <>
                  <RibbonBtn $w={54} $dim>
                    {ribbonIcons.paste}
                    <BtnLabel><LabelLine>Paste</LabelLine></BtnLabel>
                  </RibbonBtn>
                  <ClipColumn>
                    <ClipRow><Ico $s={16} $c="#777"><path d="M5 1l6 9M11 1l-6 9" /><rect x="3" y="10" width="4" height="4" fill="#2f5878" stroke="none" /><rect x="9" y="10" width="4" height="4" fill="#2f5878" stroke="none" /></Ico>Cut</ClipRow>
                    <ClipRow><Ico $s={16} $c="#6a6a6a"><path d="M4 12H1V2h6v2M4 4h6l3 3v8H4zM10 4v3h3M6 10h5M6 12.500h5" /></Ico>Copy</ClipRow>
                    <ClipRow><Ico $s={16} $c="#777"><path d="M8 7l4-5 2 2-5 4M2 12l5-6 3 3-5 6z" fill="#6c5a3c" /></Ico>Format painter</ClipRow>
                  </ClipColumn>
                </>
              ) : (
                g.items.map(([icon, w, lines, caretLine, dim]) => (
                  <RibbonBtn key={icon} $w={w} $dim={dim}>
                    {icon === "copilot" ? <CopilotMark id="cpr" s={36} /> : ribbonIcons[icon]}
                    <BtnLabel>
                      {lines.map((t, i) => (
                        <LabelLine key={i}>
                          {t}
                          {caretLine === i + 1 && <Caret />}
                        </LabelLine>
                      ))}
                    </BtnLabel>
                  </RibbonBtn>
                ))
              )}
            </GroupBody>
            <GroupLabel>{g.label}</GroupLabel>
          </Group>
        ))}
        <CollapseCaret>
          <Ico $s={10} $c="#e8e8e8" $sw={1.5}><path d="M1 7l4-4 4 4" /></Ico>
        </CollapseCaret>
      </Ribbon>
      <Main>
        <Rail>
          {railIcons.map((ic, i) => (
            <RailItem key={i} $active={i === 0}>{ic}</RailItem>
          ))}
        </Rail>
        <Center>
          <CanvasRow>
            <Canvas>
              <ReportPage>
                <ChartTitle>Country Count by Malnutrition_Level</ChartTitle>
                <ChartRow>
                  <svg width="688" height="360" viewBox="0 0 688 360">
                    <path d={slice(157.4, 464.5)} fill="#12239E" />
                    <path d={slice(104.5, 150.9)} fill="#E66C37" />
                    <path d={slice(150.9, 157.4)} fill="#118DFF" />
                    <path d="M224 76h17l9 10M463 270l8 7h11M414 314l5 8h7" fill="none" stroke="#c8c6c4" />
                    <PieLabel x="138" y="82">24K (85.31%)</PieLabel>
                    <PieLabel x="484" y="283">4K (12.88%)</PieLabel>
                    <PieLabel x="429" y="328">1K (1.81%)</PieLabel>
                  </svg>
                  <Legend>
                    <LegendTitle>Malnutrition_Level</LegendTitle>
                    <LegendItem $c="#12239E">Low</LegendItem>
                    <LegendItem $c="#E66C37">Moderate</LegendItem>
                    <LegendItem $c="#118DFF">High</LegendItem>
                  </Legend>
                </ChartRow>
              </ReportPage>
            </Canvas>
            <FilterPane>
              <Ico $s={10} $c="#333" $sw={1.6}><path d="M4.500 1.500L1 5l3.500 3.500M9 1.500L5.500 5 9 8.500" /></Ico>
              <FilterBars>
                <Ico $s={10} $c="#3a5a78"><path d="M1 4v3M4 2v6M7 3v4" /></Ico>
              </FilterBars>
              <FiltersLabel>Filters</FiltersLabel>
            </FilterPane>
          </CanvasRow>
          <TabBar>
            <ViewTabs>
              <ViewIcon $w={44}>
                <Ico $s={18} $c="#eee"><rect x="2" y="1.500" width="14" height="11" rx="1.500" /><path d="M6 15.500h6M9 12.500v3" /></Ico>
              </ViewIcon>
              <ViewIcon $w={44}>
                <Ico $s={18} $c="#eee"><rect x="4" y="1" width="10" height="16" rx="1.500" /><path d="M7 15h4" /></Ico>
              </ViewIcon>
              <ViewIcon $w={20}>
                <Ico $s={10} $c="#cfcfcf"><path d="M7 1L2.500 5 7 9z" /></Ico>
              </ViewIcon>
              <ViewIcon $w={20}>
                <Ico $s={10} $c="#cfcfcf"><path d="M3 1l4.500 4L3 9z" /></Ico>
              </ViewIcon>
              <ViewUnderline />
            </ViewTabs>
            <Tab $w={280} $sep>MALNUTRITION AND OBESITY TREND BY G...</Tab>
            <Tab $w={281} $sep $active>COUNTRY COUNT BY MALNUTRITION LE...<TabClose>x</TabClose></Tab>
            <Tab $grow>OBESITY VS MALNUTRITION TREND PER</Tab>
            <AddTab>+</AddTab>
          </TabBar>
        </Center>
        <VizPane>
          <PaneHead>Visualizations<DoubleChevron /></PaneHead>
          <SubHead>Build visual</SubHead>
          <BuildTabs>
            <BuildTab $active>
              <Ico $s={26}>
                <path d="M3 2h20" stroke="#aaa" />
                <rect x="3.500" y="5" width="19" height="8" fill={TEAL} stroke="#aaa" strokeDasharray="1.500 1.500" />
                <rect x="3.500" y="15" width="19" height="8" fill={TEAL} stroke="#aaa" strokeDasharray="1.500 1.500" />
              </Ico>
            </BuildTab>
            <BuildTab>
              <Ico $s={26}>
                <path d="M14 24H4V2h10l6 6v3M14 2v6h6" />
                <path d="M14 2l6 6h-6z" fill="#eee" />
                <path d="M16 20L26 9M12 25c3 0 6-1 7-3 0-2-2-3-3-3-2 1-2 4-4 6z" />
              </Ico>
            </BuildTab>
            <Notch />
          </BuildTabs>
          <Gallery>
            {viz.map((v, i) => (
              <Ico key={i} $s={20}>{v}</Ico>
            ))}
          </Gallery>
          <MoreDots>...</MoreDots>
          <Wells>
            <WellLabel>Values</WellLabel>
            <DropZone $mt={4} $h={28} $pl={10}>Add data fields here</DropZone>
            <WellLabel $bold $mt={10}>Drill through</WellLabel>
            <ToggleRow $mt={2}>Cross-report<Toggle>Off</Toggle></ToggleRow>
            <ToggleRow>Keep all filters<Toggle $on>On</Toggle></ToggleRow>
            <DropZone $mt={5} $h={26} $pl={8} $bg="#000">Add drill-through fields here</DropZone>
          </Wells>
        </VizPane>
        <DataPane>
          <PaneHead>Data<DoubleChevron /></PaneHead>
          <DataSearch>
            <Ico $s={15} $c="#aaa"><circle cx="6.500" cy="6.500" r="5" /><path d="M10 10l4 4" /></Ico>
            Search
          </DataSearch>
          <Tree>
            {dataRows.map((t) => (
              <TreeRow key={t}>
                <Ico $s={8} $c="#ddd"><path d="M2 .5L6 4 2 7.500" /></Ico>
                <Ico $s={12} $c="#eee"><rect x=".5" y=".5" width="11" height="11" rx="2" /><path d="M4 .5v11M8 .5v11M.5 4h11M.5 8h11" /></Ico>
                {t}
              </TreeRow>
            ))}
          </Tree>
        </DataPane>
      </Main>
      <StatusBar>
        Page 9 of 18
        <ZoomTools>
          <ZoomSign>-</ZoomSign>
          <ZoomTrack><ZoomThumb /><ZoomTick /></ZoomTrack>
          <ZoomSign>+</ZoomSign>
          <ZoomPct>67%</ZoomPct>
          <Ico $w={15} $h={10} $c="#ddd"><rect x=".5" y=".5" width="14" height="9" rx="1" /><path d="M5 2.500H3v5h2M10 2.500h2v5h-2" /></Ico>
        </ZoomTools>
      </StatusBar>
      <TaskBar>
        <Weather>
          <Ico $s={24} $c="none"><path d="M21 9a10 10 0 0 1-19 8c5 2 12 1 15-3 1-2 2-4 4-5z" fill="#f0a11f" /><path d="M3 9c0-3 4-5 6-3 2-1 4 0 4 3z" fill="#b8c8e8" /></Ico>
          <Badge $l={30} $t={-3} $c="#ff8a94">4</Badge>
          <WeatherText><span>26°C</span><span>Mostly clear</span></WeatherText>
        </Weather>
        <TaskSlot>
          <Ico $s={22} $c="none">
            <rect x="0" y="0" width="10.500" height="10.500" fill="#7fdcfb" />
            <rect x="11.500" y="0" width="10.500" height="10.500" fill="#4cc2f1" />
            <rect x="0" y="11.500" width="10.500" height="10.500" fill="#3bb0ec" />
            <rect x="11.500" y="11.500" width="10.500" height="10.500" fill="#1c94e0" />
          </Ico>
        </TaskSlot>
        <TaskSearch>
          <Ico $s={16} $c="#ddd" $sw={1.5}><circle cx="7" cy="7" r="5" /><path d="M11 11l4 4" /></Ico>
          Search
          <SearchArt>
            <Ico $w={48} $h={24} $c="none">
              <circle cx="12" cy="12" r="11" fill="#8d8468" /><circle cx="36" cy="12" r="11" fill="#8d7a5e" />
              <circle cx="8" cy="8" r="3" fill="#e8e2a0" /><circle cx="15" cy="13" r="3" fill="#dfe28a" /><circle cx="7" cy="17" r="2.500" fill="#e8e2a0" />
              <circle cx="33" cy="9" r="3" fill="#e8883a" /><circle cx="40" cy="7" r="3" fill="#e8883a" /><circle cx="36" cy="16" r="3" fill="#d8702a" />
              <path d="M22 3l2 18M20 8l6 5" stroke="#3f7a3f" strokeWidth="2" />
            </Ico>
          </SearchArt>
        </TaskSearch>
        {taskApps.map(([k, ic, dot, active]) => (
          <TaskSlot key={k} $dot={dot} $active={active}>{ic}</TaskSlot>
        ))}
        <TaskSlot $dot>
          <Ico $s={24} $c="#2fd45f" $sw={2.4}>
            <path d="M2 22l1.500-6a10 10 0 1 1 4 4z" />
            <path d="M8 8c0 5 4 8 8 9l2-2-3-2-1 1c-2-1-3-2-3-3l1-1-2-3z" fill="#2fd45f" stroke="none" />
          </Ico>
          <Badge $l={24} $t={0} $c="#d9a6e6">8</Badge>
        </TaskSlot>
        <Tray>
          <TraySlot $w={32}><Ico $s={12} $c="#eee" $sw={1.4}><path d="M2 8l4-4 4 4" /></Ico></TraySlot>
          <TraySlot $w={32}><Ico $s={18} $c="none"><path d="M3 14c-3 0-3-4 0-4 0-5 8-6 9-2 4-1 6 6 2 6z" fill="#e8e8e8" /></Ico></TraySlot>
          <TraySlot $w={32}>
            <Ico $s={18} $c="#eee"><path d="M3 8c1-5 9-6 12-2M15 2v4h-4M3 15l3-3M3 11v4h4" /><circle cx="13.500" cy="13" r="3.500" fill="#f59a14" stroke="none" /></Ico>
          </TraySlot>
          <Lang>ENG<br />IN</Lang>
          <TraySlot $w={26}><Ico $s={18} $c="#eee" $sw={1.3}><path d="M1 7c5-5 11-5 16 0M4 10c3-3 7-3 10 0M6.500 13c1.500-1.500 3.500-1.500 5 0" /><circle cx="9" cy="15.500" r="1" fill="#eee" /></Ico></TraySlot>
          <TraySlot $w={22}><Ico $s={18} $c="#eee"><path d="M2 7v4h3l4 4V3L5 7zM12 6c1 2 1 4 0 6M14.500 4c2 3 2 7 0 10" /></Ico></TraySlot>
          <TraySlot $w={28}><Ico $s={18} $c="#eee"><rect x="2" y="5" width="13" height="9" rx="1.500" /><path d="M15 8h2v3h-2" /><path d="M7 2L4 9h3l-1 6 4-8H7z" fill="#eee" stroke="#3a1c22" strokeWidth=".5" /></Ico></TraySlot>
          <Clock>23:13<br />19-06-2025</Clock>
        </Tray>
      </TaskBar>
    </Page>
  );
}
